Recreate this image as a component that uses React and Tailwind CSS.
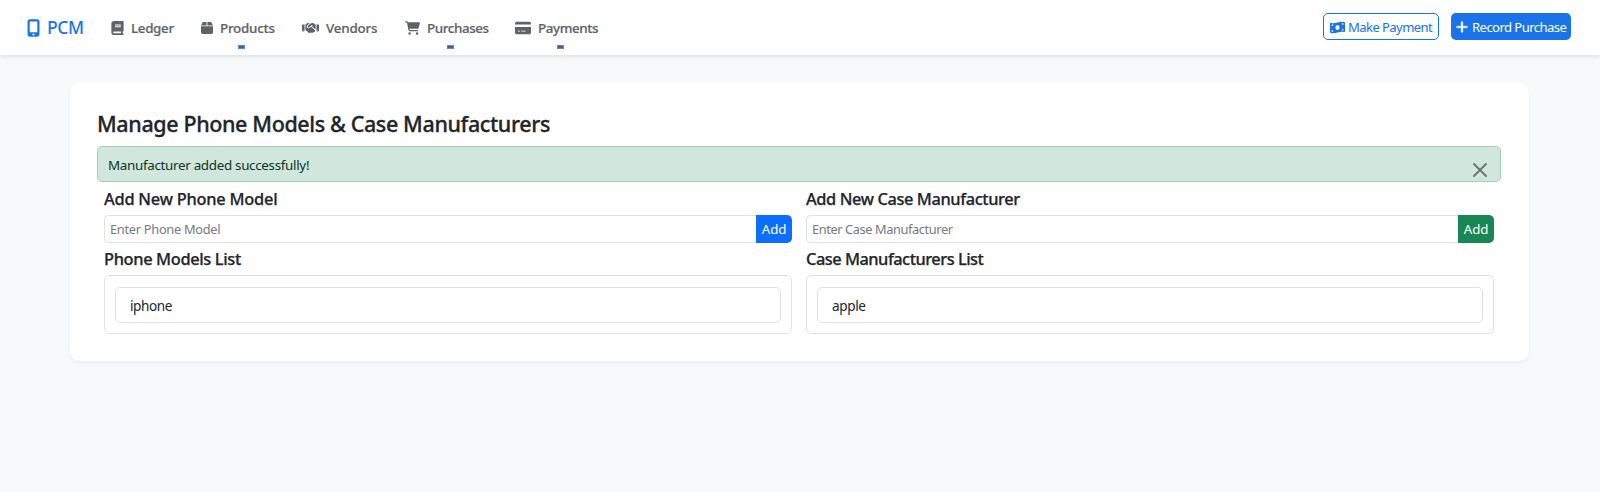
import React from "react";
import { FaMobileScreenButton, FaBook, FaBox, FaHandshake, FaCartShopping, FaCreditCard, FaMoneyBillWave, FaPlus } from "react-icons/fa6";

function NavItem({ icon: Icon, label, className, iconClass, textClass, menu }) {
  return (
    <a className={"relative flex h-[55px] items-center " + className}>
      <Icon className={"shrink-0 " + iconClass} />
      <span className={"pt-[2px] text-[13.4px] font-medium whitespace-nowrap [-webkit-text-stroke:0.2px] " + textClass}>{label}</span>
      {menu && <span className="absolute top-[45px] left-1/2 h-[4px] w-[7px] border border-[#4b8be6] bg-[#52617a]" />}
    </a>
  );
}

function Column({ title, placeholder, listTitle, item, buttonClass, titleClass, placeholderClass, listClass, itemClass }) {
  return (
    <section className="min-w-0 flex-1">
      <h2 className={"h-[33px] pt-[6px] text-[16.4px] leading-[22px] font-medium [-webkit-text-stroke:0.25px] " + titleClass}>{title}</h2>
      <div className="flex h-[28px]">
        <input placeholder={placeholder} className={"min-w-0 flex-1 rounded-l-[5px] border border-r-0 border-[#dee2e6] pt-[2px] pl-[5px] text-[12.8px] outline-none placeholder:text-[#757b80] " + placeholderClass} />
        <button className={"w-[36px] rounded-r-[5px] pt-[2px] text-[13.3px] tracking-[-0.2px] text-white " + buttonClass}>Add</button>
      </div>
      <h2 className={"h-[32px] pt-[5px] text-[16.4px] leading-[22px] font-medium [-webkit-text-stroke:0.25px] " + listClass}>{listTitle}</h2>
      <div className="h-[59px] rounded-[5px] border border-[#dee2e6] px-[10px] py-[11px]">
        <div className="flex h-[36px] items-center rounded-[5px] border border-[#dee2e6] pl-[14px] text-[13.6px]">
          <span className={"pt-[3px] " + itemClass}>{item}</span>
        </div>
      </div>
    </section>
  );
}

export default function App() {
  return (
    <div className="min-h-[492px] bg-[#f8f9fa] font-['Noto_Sans','Open_Sans',sans-serif] text-[#212529]">
      <nav className="relative flex h-[55px] bg-white pl-[27px] text-[#5f6368] shadow-[0_2px_4px_rgba(0,0,0,0.1)]">
        <a className="flex w-[84px] items-center text-[#1a73e8]">
          <FaMobileScreenButton className="h-[18px] w-[13px]" />
          <span className="ml-[7px] text-[17.5px] font-medium tracking-[-0.4px]">PCM</span>
        </a>
        <NavItem icon={FaBook} label="Ledger" className="w-[63px]" iconClass="h-[14px] w-[13px]" textClass="ml-[7px] tracking-[-0.35px]" />
        <NavItem icon={FaBox} label="Products" className="ml-[27px] w-[74px]" iconClass="h-[14px] w-[12px]" textClass="ml-[7px] tracking-[-0.25px]" menu />
        <NavItem icon={FaHandshake} label="Vendors" className="ml-[27px] w-[75px]" iconClass="h-[14px] w-[17px]" textClass="ml-[7px] tracking-[-0.2px]" />
        <NavItem icon={FaCartShopping} label="Purchases" className="ml-[28px] w-[84px]" iconClass="h-[14px] w-[15px]" textClass="ml-[7px] tracking-[-0.4px]" menu />
        <NavItem icon={FaCreditCard} label="Payments" className="ml-[26px] w-[83px]" iconClass="h-[16px] w-[16px]" textClass="ml-[7px] tracking-[-0.4px]" menu />
        <div className="mt-[13px] mr-[29px] ml-auto flex h-[27px] gap-[12px] text-[13.1px] whitespace-nowrap">
          <button className="flex w-[116px] items-center rounded-[5px] border border-[#1a73e8] pl-[6px] text-[#1a73e8]">
            <FaMoneyBillWave className="mt-px h-[15px] w-[15px]" />
            <span className="ml-[3px] pt-[3px] tracking-[-0.6px]">Make Payment</span>
          </button>
          <button className="flex w-[120px] items-center rounded-[5px] bg-[#1a73e8] pl-[5px] text-white">
            <FaPlus className="h-[14px] w-[12px]" stroke="currentColor" strokeWidth="16" />
            <span className="ml-[4px] pt-[2px] tracking-[-0.57px]">Record Purchase</span>
          </button>
        </div>
      </nav>
      <main className="mt-[27px] mr-[71px] ml-[70px] h-[279px] rounded-[10px] bg-white pt-[28px] pr-[28px] pl-[27px] shadow-[0_2px_4px_rgba(0,0,0,0.05)]">
        <h1 className="h-[36px] text-[21.5px] leading-[28px] font-medium tracking-[-0.38px] [-webkit-text-stroke:0.3px]">Manage Phone Models &amp; Case Manufacturers</h1>
        <div className="flex h-[36px] items-center justify-between rounded-[5px] border border-[#a3cfbb] bg-[#d1e7dd] pr-[13px] pl-[10px] text-[13.4px] text-[#0a3622]">
          <span className="pt-[2px] tracking-[-0.31px]">Manufacturer added successfully!</span>
          <svg className="mt-[12px] h-[14px] w-[14px]" viewBox="0 0 14 14" fill="none" stroke="#68736e" strokeWidth="1.8" strokeLinecap="round"><path d="M1 1l12 12M13 1L1 13" /></svg>
        </div>
        <div className="mx-[7px] flex gap-[14px]">
          <Column title="Add New Phone Model" placeholder="Enter Phone Model" listTitle="Phone Models List" item="iphone" buttonClass="bg-[#0d6efd]" titleClass="tracking-[-0.24px]" placeholderClass="tracking-[-0.28px]" listClass="tracking-[-0.36px]" itemClass="tracking-[-0.45px]" />
          <Column title="Add New Case Manufacturer" placeholder="Enter Case Manufacturer" listTitle="Case Manufacturers List" item="apple" buttonClass="bg-[#198754]" titleClass="tracking-[-0.4px]" placeholderClass="tracking-[-0.4px]" listClass="tracking-[-0.5px]" itemClass="tracking-[-0.4px]" />
        </div>
      </main>
    </div>
  );
}
